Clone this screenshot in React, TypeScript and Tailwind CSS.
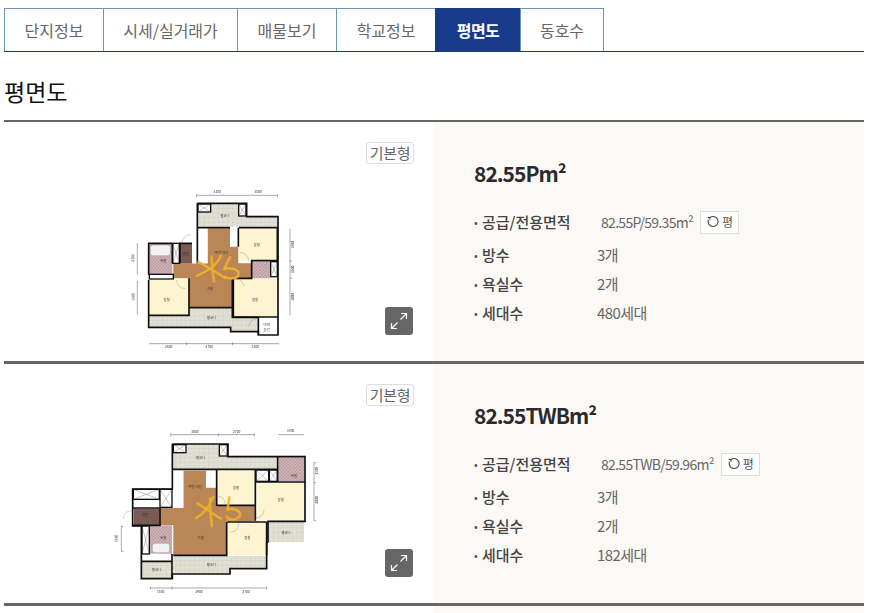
const tabs = [
  { label: '단지정보', width: 'w-[100px]' },
  { label: '시세/실거래가', width: 'w-[135px]' },
  { label: '매물보기', width: 'w-[100px]' },
  { label: '학교정보', width: 'w-[100px]' },
  { label: '평면도', width: 'w-[86px]', active: true },
  { label: '동호수', width: 'w-[84px]' },
];

function Defs({ id }: { id: string }) {
  return (
    <defs>
      <pattern id={`${id}-tile`} width="14" height="14" patternUnits="userSpaceOnUse">
        <rect width="14" height="14" fill="#e0e0d4" />
        <path d="M14 0H0V14" fill="none" stroke="#c2c2b4" strokeWidth="1.5" />
      </pattern>
      <pattern id={`${id}-wood`} width="40" height="12" patternUnits="userSpaceOnUse">
        <rect width="40" height="12" fill="#bd8a58" />
        <path d="M0 3H40M0 9H40" stroke="#b27f4e" strokeWidth="2" />
      </pattern>
      <pattern id={`${id}-pink`} width="10" height="10" patternUnits="userSpaceOnUse">
        <rect width="10" height="10" fill="#d3b7ba" />
        <path d="M0 0L10 10M10 0L0 10" stroke="#b8949a" strokeWidth="2" />
      </pattern>
      <filter id={`${id}-soft`}>
        <feGaussianBlur stdDeviation="1" />
      </filter>
    </defs>
  );
}

function Box({ x, y, w, h }: { x: number; y: number; w: number; h: number }) {
  return (
    <g fill="#fff" stroke="#111" strokeWidth="4">
      <rect x={x} y={y} width={w} height={h} />
      <path d={`M${x} ${y}L${x + w} ${y + h}M${x + w} ${y}L${x} ${y + h}`} strokeWidth="1" stroke="#555" />
    </g>
  );
}

function Dim({ d }: { d: string }) {
  return <path d={d} fill="none" stroke="#555" strokeWidth="1.5" />;
}

function Label({ x, y, children, size = 10, rotate }: { x: number; y: number; children: string; size?: number; rotate?: boolean }) {
  return (
    <text
      x={x}
      y={y}
      fontSize={size}
      fill="#333"
      textAnchor="middle"
      fontFamily="'Noto Sans CJK KR', sans-serif"
      transform={rotate ? `rotate(-90 ${x} ${y})` : undefined}
    >
      {children}
    </text>
  );
}

function PlanOne() {
  return (
    <svg viewBox="0 0 600 525" className="block h-[175px] w-[200px]">
      <Defs id="a" />
      <g filter="url(#a-soft)">
        <path d="M232 70H380V110H472V140H232Z" fill="url(#a-tile)" />
        <path d="M88 408H207V385H337V412H412V455H332V440H88Z" fill="url(#a-tile)" />
        <path d="M262 145H330V200H355V250H395V295H337V383H207V295H160V250H262Z" fill="url(#a-wood)" />
        <rect x="233" y="145" width="30" height="105" fill="#fff" />
        <rect x="180" y="190" width="36" height="60" fill="#7a5a52" />
        <rect x="216" y="190" width="15" height="60" fill="#fff" />
        <rect x="85" y="190" width="72" height="95" fill="url(#a-pink)" />
        <rect x="91" y="195" width="60" height="32" rx="8" fill="#f2f2f2" stroke="#777" />
        <rect x="88" y="283" width="72" height="14" fill="#fff" stroke="#111" strokeWidth="4" />
        <rect x="357" y="145" width="115" height="97" fill="#fdf5d0" />
        <rect x="88" y="300" width="118" height="105" fill="#fdf5d0" />
        <rect x="340" y="297" width="132" height="114" fill="#fdf5d0" />
        <rect x="395" y="245" width="55" height="50" fill="url(#a-pink)" />
        <rect x="415" y="415" width="57" height="50" fill="#fff" />
        <Box x={234} y={72} w={38} h={24} />
        <Box x={356} y={72} w={22} h={36} />
        <Box x={158} y={190} w={20} h={60} />
        <Box x={452} y={245} w={20} h={45} />
        <g fill="none" stroke="#111" strokeWidth="5">
          <path d="M232 70H380V110H474V465H415V455H332V442H86V300M86 285V190H157" />
          <path d="M232 70V250M232 143H330M357 143H472V242H395V295H340V411H474" />
          <path d="M355 143V200M86 406H207V295M207 383H337V297M216 190H180V250M157 190V250M337 385V412H415V465" />
        </g>
        <path d="M186 190A26 26 0 0 1 212 164M360 217A26 26 0 0 1 386 243M170 300A26 26 0 0 0 196 326M348 296A26 26 0 0 1 372 320M386 440A26 26 0 0 1 412 416" fill="none" stroke="#777" strokeWidth="1" />
        <Label x={315} y={110}>발코니</Label>
        <Label x={410} y={197}>침실</Label>
        <Label x={305} y={222}>주방/식당</Label>
        <Label x={130} y={246}>욕실</Label>
        <Label x={197} y={225}>현관</Label>
        <Label x={270} y={330}>거실</Label>
        <Label x={140} y={362}>침실</Label>
        <Label x={405} y={362}>침실</Label>
        <Label x={275} y={418}>발코니</Label>
        <Label x={440} y={438}>대피</Label>
        <Label x={440} y={452}>공간</Label>
        <Label x={292} y={39}>3100</Label>
        <Label x={415} y={39}>3000</Label>
        <Label x={146} y={505}>2800</Label>
        <Label x={268} y={505}>2700</Label>
        <Label x={406} y={505}>3300</Label>
        <Label x={44} y={234} rotate>2100</Label>
        <Label x={44} y={350} rotate>3300</Label>
        <Label x={522} y={194} rotate>2800</Label>
        <Label x={522} y={268} rotate>1500</Label>
        <Label x={522} y={350} rotate>3000</Label>
        <Dim d="M230 46H472M230 42V52M472 42V52M87 491H478M200 487V496M338 487V496M52 190V284M52 302V404M510 146V406M510 243H516M510 295H516" />
      </g>
      <path d="M235 246C255 255 285 275 315 294M302 226C296 250 270 270 230 288M275 230C275 255 278 280 282 305M330 232L312 268C325 262 360 265 355 285C350 298 325 298 315 290" fill="none" stroke="#eeb12c" strokeWidth="7" strokeLinecap="round" strokeLinejoin="round" />
    </svg>
  );
}

function PlanTwo() {
  return (
    <svg viewBox="0 0 630 555" className="block h-[185px] w-[210px]">
      <Defs id="b" />
      <g filter="url(#b-soft)">
        <path d="M188 72H354V110H502V148H188Z" fill="url(#b-tile)" />
        <path d="M190 408H470V446H360V462H190Z" fill="url(#b-tile)" />
        <rect x="474" y="306" width="108" height="60" fill="url(#b-tile)" />
        <rect x="95" y="424" width="92" height="50" fill="url(#b-tile)" />
        <path d="M220 152H288V203H320V256H434V304H350V405H190V316H150V264H220Z" fill="url(#b-wood)" />
        <rect x="191" y="152" width="29" height="110" fill="#fff" />
        <rect x="72" y="266" width="77" height="50" fill="#7a5a52" />
        <rect x="68" y="208" width="118" height="55" fill="#fff" />
        <rect x="322" y="152" width="112" height="102" fill="#fdf5d0" />
        <rect x="440" y="188" width="142" height="114" fill="#fdf5d0" />
        <path d="M352 306H470V405H352Z" fill="#fdf5d0" />
        <rect x="505" y="112" width="78" height="72" fill="url(#b-pink)" />
        <rect x="118" y="316" width="68" height="85" fill="url(#b-pink)" />
        <rect x="127" y="370" width="52" height="28" rx="8" fill="#f2f2f2" stroke="#777" />
        <rect x="96" y="402" width="90" height="18" fill="#fff" />
        <Box x={190} y={74} w={38} h={24} />
        <Box x={328} y={74} w={24} h={34} />
        <Box x={438} y={150} w={38} h={34} />
        <Box x={478} y={150} w={24} h={34} />
        <Box x={70} y={208} w={78} h={30} />
        <Box x={150} y={208} w={36} h={54} />
        <Box x={96} y={318} w={22} h={84} />
        <g fill="none" stroke="#111" strokeWidth="5">
          <path d="M187 72H354V110H585V304H474V366H470V446H360V462H187V476H94V318H68V207H187V72" />
          <path d="M187 148H502M320 150V256H436V150M436 186H585M436 188V302M350 306V406H190M470 306V406M352 306H470M503 110V184M68 264H150V316H68M186 424H94M186 402V476" />
        </g>
        <path d="M40 297A24 24 0 0 1 64 272M436 294A24 24 0 0 0 462 270M186 458A24 24 0 0 0 186 432M362 336A24 24 0 0 0 386 310M322 228A24 24 0 0 1 346 254" fill="none" stroke="#777" strokeWidth="1" />
        <Label x={272} y={116}>발코니</Label>
        <Label x={378} y={206}>침실</Label>
        <Label x={255} y={203}>주방/식당</Label>
        <Label x={512} y={244}>침실</Label>
        <Label x={552} y={171}>욕실</Label>
        <Label x={106} y={288}>현관</Label>
        <Label x={272} y={356}>거실</Label>
        <Label x={412} y={358}>침실</Label>
        <Label x={160} y={358}>욕실</Label>
        <Label x={528} y={341}>발코니</Label>
        <Label x={304} y={437}>발코니</Label>
        <Label x={140} y={452}>발코니</Label>
        <Label x={255} y={38}>3000</Label>
        <Label x={380} y={38}>2700</Label>
        <Label x={542} y={37}>1400</Label>
        <Label x={152} y={518}>1500</Label>
        <Label x={267} y={518}>3900</Label>
        <Label x={408} y={518}>2700</Label>
        <Label x={24} y={355} rotate>1500</Label>
        <Label x={624} y={153} rotate>1200</Label>
        <Label x={624} y={240} rotate>3000</Label>
        <Dim d="M182 44H433M182 40V49M325 40V49M433 40V49M505 44H582M121 504H470M121 500V509M186 500V509M470 500V509M34 319V394M34 319H40M34 394H40M612 128V302M612 128H618M612 302H618M612 188H618" />
      </g>
      <path d="M262 250C285 262 310 285 334 296M310 230C300 255 285 280 258 294M300 235C300 262 302 295 306 318M358 232L352 270C360 262 392 268 390 285C385 302 358 302 350 290" fill="none" stroke="#eeb12c" strokeWidth="7" strokeLinecap="round" strokeLinejoin="round" />
    </svg>
  );
}

function ExpandIcon() {
  return (
    <svg viewBox="0 0 28 28" className="block h-7 w-7" fill="none" stroke="#fff" strokeWidth="1.2">
      <path d="M6.500 21.500L12.500 15.500M15.500 12.500L21.500 6.500M16 6.500H21.500V12M6.500 16V21.500H12" />
    </svg>
  );
}

function RefreshIcon() {
  return (
    <svg viewBox="0 0 14 14" className="h-[14px] w-[14px]" fill="none" stroke="#444" strokeWidth="1.1">
      <path d="M4 2.600A5 5 0 1 1 2.400 4.800M1.800 2.400L4 2.600L3.800 4.700" />
    </svg>
  );
}

function SpecRow({ label, value }: { label: string; value: string }) {
  return (
    <div className="flex h-[29px] items-center text-[15px]">
      <span className="w-[8px] text-[11px] text-[#555]">•</span>
      <span className="w-[115px] font-medium text-[#444]">{label}</span>
      <span className="tracking-[-0.6px] text-[#666]">{value}</span>
    </div>
  );
}

function FloorRow({
  plan,
  title,
  area,
  rooms,
  baths,
  units,
  planClass,
}: {
  plan: React.ReactNode;
  title: string;
  area: string;
  rooms: string;
  baths: string;
  units: string;
  planClass: string;
}) {
  return (
    <div className="flex h-[239px]">
      <div className="relative w-[430px] shrink-0">
        <div className={planClass}>{plan}</div>
        <span className="absolute right-[20px] top-[20px] flex h-[22px] w-[48px] items-center justify-center rounded-[3px] border border-[#ddd] bg-white text-[15px] tracking-[-0.3px] text-[#666]">
          기본형
        </span>
        <button className="absolute right-[21px] top-[185px] rounded-[3px] bg-[#666]">
          <ExpandIcon />
        </button>
      </div>
      <div className="flex-1 bg-[#fbf9f6] pl-[40px] pt-[33px]">
        <h3 className="text-[21px] font-bold leading-[36px] tracking-[-1px] text-[#2a2a2a]">{title}</h3>
        <div className="mt-[18px] flex h-[26px] items-center text-[15px]">
          <span className="w-[8px] text-[11px] text-[#555]">•</span>
          <span className="w-[119px] font-medium text-[#444]">공급/전용면적</span>
          <span className="text-[14px] tracking-[-0.7px] text-[#666]">{area}</span>
          <span className="ml-[7px] flex h-[23px] w-[39px] items-center justify-center gap-[2px] border border-[#ddd] bg-white text-[12px] text-[#555]">
            <RefreshIcon />평
          </span>
        </div>
        <div className="mt-[6px]">
          <SpecRow label="방수" value={rooms} />
          <SpecRow label="욕실수" value={baths} />
          <SpecRow label="세대수" value={units} />
        </div>
      </div>
    </div>
  );
}

export default function App() {
  return (
    <div className="h-[613px] overflow-hidden bg-white px-[4px] pt-[8px] font-['Noto_Sans_CJK_KR',sans-serif]">
      <div className="w-[860px]">
        <div className="flex h-[44px] border-b border-[#1d3b78]">
          {tabs.map((tab) => (
            <div
              key={tab.label}
              className={
                tab.active
                  ? `${tab.width} -ml-px flex items-center justify-center border border-[#173a8b] bg-[#173a8b] text-[16px] font-bold tracking-[-0.5px] text-white first:ml-0`
                  : `${tab.width} -ml-px flex items-center justify-center border border-b-0 border-[#6e94b6] text-[16px] text-[#666] first:ml-0`
              }
            >
              {tab.label}
            </div>
          ))}
        </div>
        <h2 className="mt-[19px] text-[23px] leading-[40px] text-[#111]">평면도</h2>
        <div className="mt-[9px] border-t-2 border-[#666]">
          <FloorRow
            plan={<PlanOne />}
            planClass="ml-[116px] mt-[58px]"
            title="82.55Pm²"
            area="82.55P/59.35m²"
            rooms="3개"
            baths="2개"
            units="480세대"
          />
        </div>
        <div className="border-t-[3px] border-[#666]">
          <FloorRow
            plan={<PlanTwo />}
            planClass="ml-[106px] mt-[56px]"
            title="82.55TWBm²"
            area="82.55TWB/59.96m²"
            rooms="3개"
            baths="2개"
            units="182세대"
          />
        </div>
        <div className="border-t-[3px] border-[#666]">
          <div className="ml-[430px] h-[20px] bg-[#fbf9f6]" />
        </div>
      </div>
    </div>
  );
}
